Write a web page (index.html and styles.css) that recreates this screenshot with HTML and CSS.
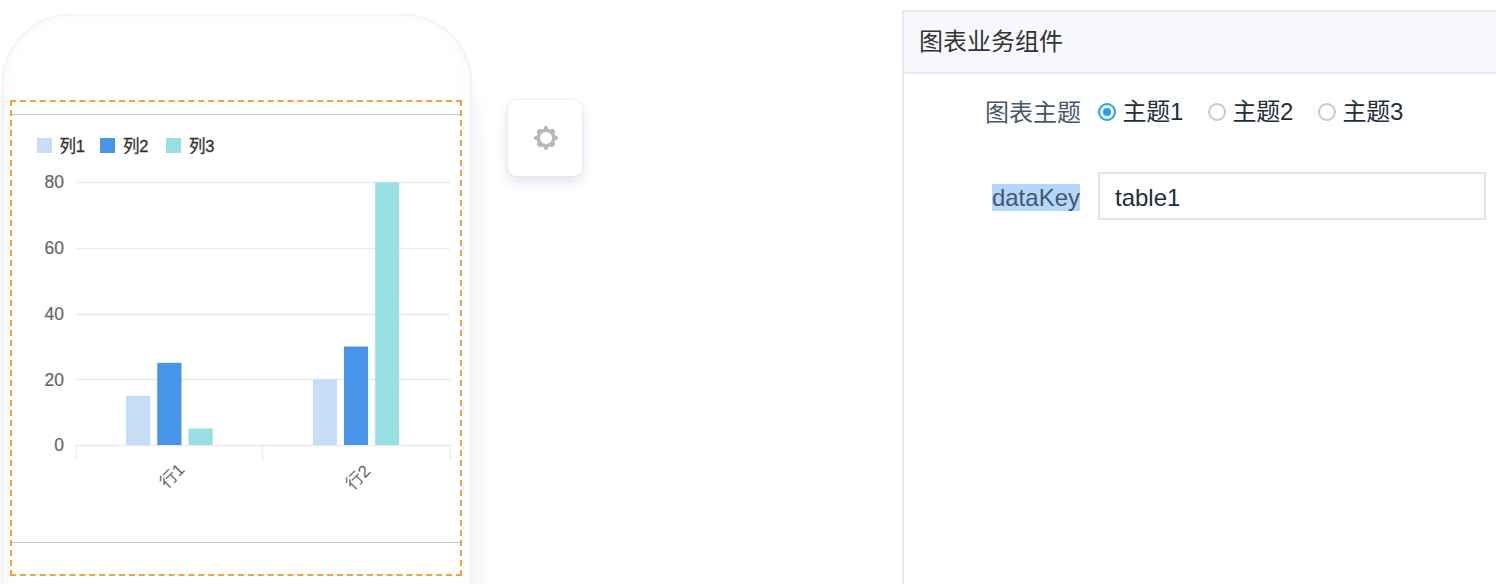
FILE: index.html
```html
<!DOCTYPE html>
<html lang="zh-CN">
<head>
<meta charset="utf-8">
<title>图表业务组件</title>
<link rel="stylesheet" href="styles.css">
</head>
<body>
<main class="editor">
  <section class="phone">
    <div class="selection">
      <div class="chart">
        <svg class="chart-svg" viewBox="12 115 448 427" width="448" height="427">
          <rect x="37" y="138" width="15" height="15" fill="#c7ddf8"/>
          <rect x="100" y="138" width="15" height="15" fill="#4695ea"/>
          <rect x="166" y="138" width="15" height="15" fill="#96dfe4"/>
          <g class="legend">
            <text x="59.500" y="152">列1</text>
            <text x="123" y="152">列2</text>
            <text x="189" y="152">列3</text>
          </g>
          <g class="grid">
            <path d="M76 182.5H450M76 248.5H450M76 314.5H450M76 379.5H450"/>
          </g>
          <g class="axis">
            <path d="M76 445.500H451M76.500 445V460M262.500 445V460M450.500 445V460"/>
          </g>
          <g class="ticks">
            <text x="64" y="188">80</text>
            <text x="64" y="254">60</text>
            <text x="64" y="319.500">40</text>
            <text x="64" y="385.500">20</text>
            <text x="64" y="451">0</text>
          </g>
          <g fill="#c7ddf8">
            <rect x="126" y="395.700" width="24.200" height="49.300"/>
            <rect x="313" y="379.200" width="24" height="65.800"/>
          </g>
          <g fill="#4695ea">
            <rect x="157.300" y="362.800" width="24.200" height="82.200"/>
            <rect x="344" y="346.500" width="24" height="98.500"/>
          </g>
          <g fill="#96dfe4">
            <rect x="188.500" y="428.500" width="24.200" height="16.500"/>
            <rect x="375.200" y="182.300" width="24" height="262.700"/>
          </g>
          <g class="rows">
            <text transform="translate(185.500 470.500) rotate(-45)">行1</text>
            <text transform="translate(371.500 472) rotate(-45)">行2</text>
          </g>
        </svg>
      </div>
    </div>
  </section>
  <button class="tool" aria-label="设置">
    <svg width="26" height="26" viewBox="-13 -13 26 26">
      <g fill="#b8b8b8">
        <path d="M-3 -8L-1.400 -11.500Q0 -13 1.400 -11.500L3 -8ZM-3 8L-1.400 11.500Q0 13 1.400 11.500L3 8ZM-8 -3L-11.500 -1.400Q-13 0 -11.500 1.400L-8 3ZM8 -3L11.500 -1.400Q13 0 11.500 1.400L8 3Z"/>
        <path transform="rotate(45)" d="M-3.500 -8L-2 -11Q0 -12 2 -11L3.500 -8ZM-3.500 8L-2 11Q0 12 2 11L3.500 8ZM-8 -3.500L-11 -2Q-12 0 -11 2L-8 3.500ZM8 -3.500L11 -2Q12 0 11 2L8 3.500Z"/>
      </g>
      <circle r="7.700" fill="none" stroke="#b8b8b8" stroke-width="3.200"/>
    </svg>
  </button>
  <aside class="panel">
    <h1 class="panel-title">图表业务组件</h1>
    <div class="row row-theme">
      <span class="label">图表主题</span>
      <div class="radios">
        <label class="radio"><i class="dot dot-on"></i><span>主题1</span></label>
        <label class="radio"><i class="dot"></i><span>主题2</span></label>
        <label class="radio"><i class="dot"></i><span>主题3</span></label>
      </div>
    </div>
    <div class="row row-key">
      <span class="label"><span class="marked">dataKey</span></span>
      <div class="input">table1</div>
    </div>
  </aside>
</main>
</body>
</html>
```
FILE: styles.css
```css
* { box-sizing: border-box; }
body {
  margin: 0;
  background: #fff;
  font-family: "Liberation Sans", "Noto Sans CJK SC", sans-serif;
}
.editor {
  display: flex;
  align-items: flex-start;
  width: 1496px;
  height: 584px;
  overflow: hidden;
}
.phone {
  flex: none;
  width: 470px;
  height: 800px;
  margin: 14px 0 0 2px;
  padding: 86px 0 0 8px;
  border-radius: 70px;
  background: #fff;
  box-shadow: inset 0 0 3px 0 #e3e5ec, inset 0 -8px 22px 0 #f3f3f7, 0 0 2px #eceef3, 2px 44px 24px 0 #e9edf5;
}
.selection {
  width: 452px;
  height: 476px;
  padding-top: 12px;
  border: 2px dashed #f2a143;
  background: #fff;
}
.chart {
  height: 429px;
  border-top: 1px solid #c6c6c6;
  border-bottom: 1px solid #c6c6c6;
}
.chart-svg { display: block; }
.legend { font-size: 16.500px; letter-spacing: -0.300px; fill: #333; stroke: #333; stroke-width: 0.300px; }
.ticks { font-size: 17.500px; fill: #666; stroke: #666; stroke-width: 0.200px; text-anchor: end; }
.rows { font-size: 17px; fill: #666; text-anchor: end; }
.grid, .axis { stroke: #e9ebed; stroke-width: 1.300px; fill: none; }
.tool {
  display: flex;
  flex: none;
  align-items: center;
  justify-content: center;
  width: 74px;
  height: 76px;
  margin: 100px 0 0 36px;
  padding: 0 0 0 2px;
  border: 0;
  border-radius: 8px;
  background: #fff;
  box-shadow: 0 0 2px #d0d3dc, 0 6px 14px #dfe3ee;
}
.panel {
  flex: none;
  width: 594px;
  height: 590px;
  margin: 10px 0 0 320px;
  border: 2px solid #e7e8ec;
  border-right: 0;
}
.panel-title {
  height: 62px;
  margin: 0;
  padding-left: 15px;
  border-bottom: 2px solid #e7e8ec;
  background: #f8f9fe;
  color: #333;
  font-size: 24px;
  font-weight: 400;
  line-height: 59px;
}
.row { display: flex; height: 48px; color: #1f2d3d; font-size: 24px; }
.row-theme { margin-top: 14px; }
.row-key { margin-top: 36px; }
.label {
  width: 176px;
  margin-right: 18px;
  color: #48576a;
  line-height: 52px;
  text-align: right;
  white-space: nowrap;
}
.row-theme .label { width: 177px; margin-right: 17px; line-height: 50px; }
.marked { background: #b3d7ff; }
.radios { display: flex; gap: 26px; line-height: 46px; }
.radio { display: flex; align-items: center; gap: 6.500px; width: 84px; letter-spacing: -0.300px; white-space: nowrap; }
.dot {
  display: flex;
  flex: none;
  align-items: center;
  justify-content: center;
  width: 18px;
  height: 18px;
  border: 2px solid #c5cbd6;
  border-radius: 50%;
}
.dot-on { border-color: #20a0ff; }
.dot-on::after { content: ""; width: 8px; height: 8px; border-radius: 50%; background: #20a0ff; }
.input {
  width: 388px;
  padding-left: 15px;
  border: 2px solid #e4e4e4;
  line-height: 47px;
}
```
